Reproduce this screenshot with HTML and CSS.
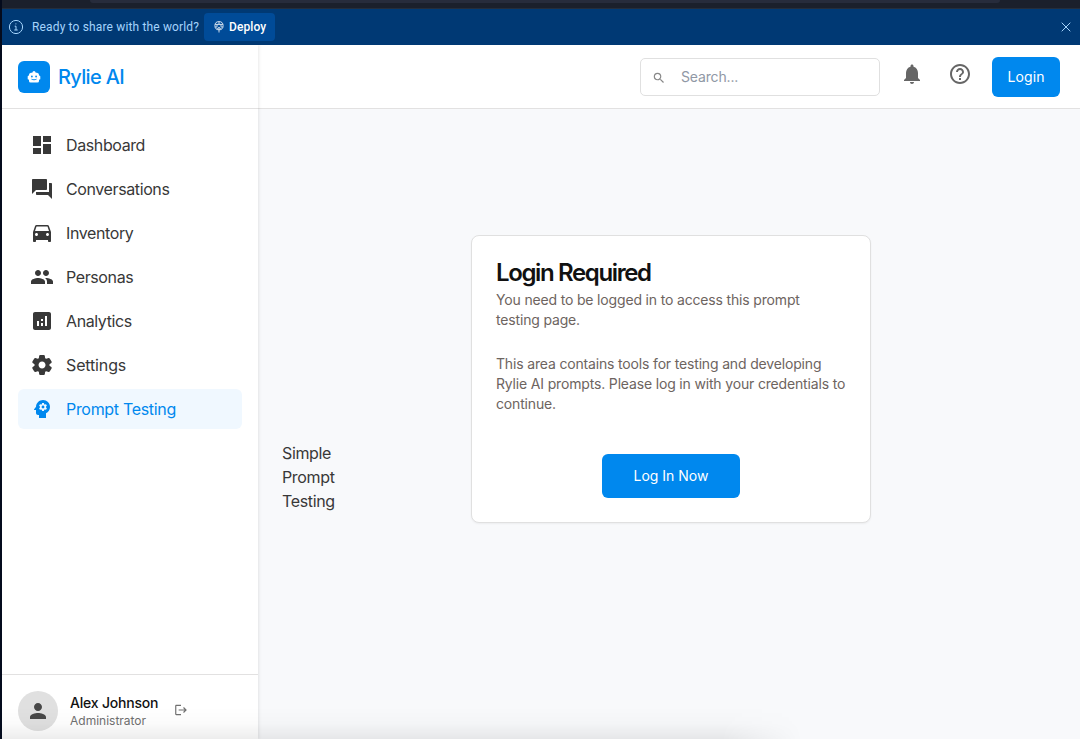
FILE: index.html
```html
<!DOCTYPE html>
<html lang="en">
<head>
<meta charset="utf-8">
<title>Rylie AI</title>
<link rel="stylesheet" href="styles.css">
</head>
<body>
<div class="window">
  <div class="chrome"><div class="address"></div></div>
  <div class="banner">
    <svg class="info" viewBox="0 0 16 16"><circle cx="8" cy="8" r="6.6"/><path d="M6.700 7.200H8v3.800M6.300 11h3.400M7.400 4.900h1"/></svg>
    <span class="banner-text">Ready to share with the world?</span>
    <button class="deploy"><svg viewBox="0 0 12 12"><circle cx="6" cy="4.700" r="4.100"/><path d="M2.200 3.400h7.600M2.200 6h2M7.800 6h2M6 .8v2.600M6 6.500v5M4 3.400v2.300M8 3.400v2.300M3.900 8.300L6 6.300l2.100 2"/></svg><span>Deploy</span></button>
    <svg class="close" viewBox="0 0 12 12"><path d="M1.700 1.700l8.600 8.600M10.300 1.700l-8.600 8.600"/></svg>
  </div>
  <div class="app">
    <aside class="sidebar">
      <div class="brand">
        <span class="logo"><svg viewBox="0 0 14 14"><path fill-rule="evenodd" d="M5.700 1.700Q7 .3 8.300 1.700L8.700 2.800H10Q12 3 12.200 5.500L13.300 6.300V9.200L12 9.800V11Q12 12.600 10.400 12.600H3.600Q2 12.600 2 11V9.800L.7 9.200V6.300L1.800 5.500Q2 3 4 2.800H5.300ZM4.900 5.600a.9.9 0 1 0 0 1.800.9.9 0 0 0 0-1.800zM9.100 5.600a.9.9 0 1 0 0 1.800.9.9 0 0 0 0-1.800zM4 8.900Q7 11.500 10 8.900L9.500 8.700Q7 10 4.500 8.700Z"/></svg></span>
        <span class="brand-name">Rylie AI</span>
      </div>
      <nav class="nav">
        <a class="item"><svg viewBox="0 0 24 24"><path d="M3 13h8V3H3v10zm0 8h8v-6H3v6zm10 0h8V11h-8v10zm0-18v6h8V3h-8z"/></svg><span>Dashboard</span></a>
        <a class="item"><svg viewBox="0 0 24 24"><path d="M21 6h-2v9H6v2c0 .55.45 1 1 1h11l4 4V7c0-.55-.45-1-1-1zm-4 6V3c0-.55-.45-1-1-1H3c-.55 0-1 .45-1 1v14l4-4h10c.55 0 1-.45 1-1z"/></svg><span>Conversations</span></a>
        <a class="item"><svg viewBox="0 0 24 24"><path d="M18.920 5.010C18.720 4.420 18.160 4 17.500 4h-11c-.66 0-1.210.42-1.420 1.010L3 11v9c0 .55.45 1 1 1h1c.55 0 1-.45 1-1v-1h12v1c0 .55.45 1 1 1h1c.55 0 1-.45 1-1v-9l-2.080-5.990zM6.500 15c-.83 0-1.500-.67-1.500-1.500S5.670 12 6.500 12s1.500.67 1.500 1.500S7.330 15 6.500 15zm11 0c-.83 0-1.500-.67-1.500-1.500s.67-1.500 1.500-1.500 1.500.67 1.500 1.500-.67 1.500-1.500 1.500zM5 10l1.500-4.500h11L19 10H5z"/></svg><span>Inventory</span></a>
        <a class="item"><svg viewBox="0 0 24 24"><path d="M16 11c1.660 0 2.990-1.340 2.990-3S17.660 5 16 5s-3 1.340-3 3 1.340 3 3 3zm-8 0c1.660 0 2.990-1.340 2.990-3S9.660 5 8 5 5 6.340 5 8s1.340 3 3 3zm0 2c-2.330 0-7 1.170-7 3.500V19h14v-2.500c0-2.330-4.670-3.500-7-3.500zm8 0c-.29 0-.62.02-.97.05 1.160.84 1.970 1.970 1.970 3.450V19h6v-2.500c0-2.330-4.670-3.500-7-3.500z"/></svg><span>Personas</span></a>
        <a class="item"><svg viewBox="0 0 24 24"><path d="M19 3H5c-1.100 0-2 .9-2 2v14c0 1.100.9 2 2 2h14c1.100 0 2-.9 2-2V5c0-1.100-.9-2-2-2zM9 17H7v-5h2v5zm4 0h-2v-3h2v3zm0-5h-2v-2h2v2zm4 5h-2V7h2v10z"/></svg><span>Analytics</span></a>
        <a class="item settings"><svg viewBox="0 0 24 24"><path d="M19.500 12c0-.23-.01-.45-.03-.68l1.860-1.410c.4-.3.51-.86.26-1.300l-1.870-3.230c-.25-.44-.79-.62-1.250-.42l-2.150.91c-.37-.26-.76-.49-1.170-.68l-.29-2.310C14.800 2.380 14.370 2 13.870 2h-3.730c-.51 0-.94.38-1 .88l-.29 2.310c-.41.19-.8.42-1.170.68l-2.150-.91c-.46-.2-1-.02-1.250.42L2.410 8.620c-.25.44-.14.99.26 1.300l1.860 1.410a7.300 7.300 0 0 0 0 1.350l-1.860 1.410c-.4.3-.51.86-.26 1.300l1.870 3.230c.25.44.79.62 1.250.42l2.150-.91c.37.26.76.49 1.170.68l.29 2.310c.06.5.49.88.99.88h3.730c.5 0 .93-.38.99-.88l.29-2.310c.41-.19.8-.42 1.170-.68l2.150.91c.46.2 1 .02 1.250-.42l1.870-3.230c.25-.44.14-.99-.26-1.300l-1.860-1.410c.03-.23.04-.45.04-.68zm-7.460 3.500c-1.930 0-3.500-1.570-3.500-3.500s1.570-3.500 3.500-3.500 3.500 1.570 3.500 3.500-1.570 3.500-3.500 3.500z"/></svg><span>Settings</span></a>
        <a class="item active"><svg viewBox="0 0 24 24"><path d="M13 8.570c-.79 0-1.430.64-1.430 1.430s.64 1.430 1.430 1.430 1.430-.64 1.430-1.430-.64-1.430-1.430-1.430z"/><path d="M13 3C9.250 3 6.200 5.940 6.020 9.640L4.100 12.200c-.25.33-.01.8.4.8H6v3c0 1.100.9 2 2 2h1v3h7v-4.680c2.360-1.120 4-3.530 4-6.320 0-3.870-3.130-7-7-7zm3 7c0 .13-.01.26-.02.39l.83.66c.08.06.1.16.05.25l-.8 1.390c-.05.09-.16.12-.24.09l-.99-.4c-.21.16-.43.29-.67.39L14 13.830c-.01.1-.1.17-.2.17h-1.600c-.1 0-.18-.07-.2-.17l-.15-1.060c-.25-.1-.47-.23-.68-.39l-.99.4c-.09.03-.2 0-.25-.09l-.8-1.390c-.05-.08-.03-.19.05-.25l.84-.66c-.01-.13-.02-.26-.02-.39s.02-.27.04-.39l-.85-.66c-.08-.06-.1-.16-.05-.26l.8-1.380c.05-.09.15-.12.24-.09l1 .4c.2-.15.43-.29.67-.39L12 6.170c.02-.1.1-.17.2-.17h1.600c.1 0 .18.07.2.17l.15 1.060c.24.1.46.23.67.39l1-.4c.09-.03.2 0 .24.09l.8 1.380c.05.09.03.2-.05.26l-.85.66c.03.12.04.25.04.39z"/></svg><span>Prompt Testing</span></a>
      </nav>
      <div class="user">
        <span class="avatar"><svg viewBox="0 0 24 24"><path d="M12 12c2.210 0 4-1.790 4-4s-1.790-4-4-4-4 1.790-4 4 1.790 4 4 4zm0 2c-2.670 0-8 1.340-8 4v2h16v-2c0-2.660-5.330-4-8-4z"/></svg></span>
        <div class="who"><div class="name">Alex Johnson</div><div class="role">Administrator</div></div>
        <svg class="logout" viewBox="0 0 24 24"><path d="M17 7l-1.410 1.410L18.170 11H8v2h10.170l-2.580 2.580L17 17l5-5zM4 5h8V3H4c-1.100 0-2 .9-2 2v14c0 1.100.9 2 2 2h8v-2H4V5z"/></svg>
      </div>
    </aside>
    <div class="content">
      <header class="topbar">
        <div class="search"><svg viewBox="0 0 24 24"><path d="M15.500 14h-.79l-.28-.27A6.470 6.470 0 0 0 16 9.500 6.500 6.500 0 1 0 9.500 16c1.610 0 3.090-.59 4.230-1.570l.27.28v.79l5 4.990L20.490 19l-4.990-5zm-6 0C7.010 14 5 11.990 5 9.500S7.010 5 9.500 5 14 7.010 14 9.500 11.990 14 9.500 14z"/></svg><span>Search...</span></div>
        <svg class="bell" viewBox="0 0 24 24"><path d="M12 22c1.100 0 2-.9 2-2h-4c0 1.100.89 2 2 2zm6-6v-5c0-3.070-1.640-5.640-4.500-6.320V4c0-.83-.67-1.500-1.500-1.500s-1.500.67-1.500 1.500v.68C7.630 5.360 6 7.920 6 11v5l-2 2v1h16v-1l-2-2z"/></svg>
        <svg class="help" viewBox="0 0 24 24"><path d="M11 18h2v-2h-2v2zm1-16C6.480 2 2 6.480 2 12s4.480 10 10 10 10-4.480 10-10S17.520 2 12 2zm0 18c-4.410 0-8-3.590-8-8s3.590-8 8-8 8 3.590 8 8-3.590 8-8 8zm0-14c-2.210 0-4 1.790-4 4h2c0-1.100.9-2 2-2s2 .9 2 2c0 2-3 1.750-3 5h2c0-2.250 3-2.500 3-5 0-2.210-1.790-4-4-4z"/></svg>
        <button class="login">Login</button>
      </header>
      <main class="main">
        <div class="label">Simple Prompt Testing</div>
        <div class="stage">
          <section class="card">
            <h1>Login Required</h1>
            <p>You need to be logged in to access this prompt testing page.</p>
            <p class="second">This area contains tools for testing and developing Rylie AI prompts. Please log in with your credentials to continue.</p>
            <button class="cta">Log In Now</button>
          </section>
        </div>
      </main>
    </div>
  </div>
  <div class="shade"></div>
</div>
</body>
</html>
```

FILE: styles.css
```css
* { box-sizing: border-box; }
body { margin: 0; font-family: Inter, "Liberation Sans", sans-serif; font-size: 16px; line-height: 24px; color: #383838; }
button { border: 0; padding: 0; font: inherit; color: inherit; letter-spacing: inherit; }
svg { display: block; flex: none; fill: currentColor; }
.window { position: relative; width: 1080px; height: 739px; overflow: hidden; display: flex; flex-direction: column; border-left: 2px solid #040b1d; }
.chrome { height: 9px; flex: none; background: #1b202c; border-bottom: 1px solid #252e3c; padding: 0 80px 0 88px; }
.address { height: 3px; background: #272c3c; border-radius: 0 0 4px 4px; }
.banner { height: 36px; flex: none; background: #003974; display: flex; align-items: center; padding: 0 8px 0 6px; color: #a5d4fc; font-family: Roboto, sans-serif; font-size: 12px; line-height: 16px; }
.info { width: 16px; height: 16px; fill: none; stroke: currentColor; }
.banner-text { margin-left: 8px; width: 166px; white-space: nowrap; letter-spacing: .15px; }
.deploy { margin-left: 6px; width: 71px; height: 28px; border-radius: 4px; background: #004b98; color: #fff; display: flex; align-items: center; gap: 4px; padding-left: 9px; font-weight: 500; letter-spacing: .1px; }
.deploy svg { width: 12px; height: 12px; fill: none; stroke: currentColor; stroke-width: .8; }
.close { width: 12px; height: 12px; fill: none; stroke: currentColor; margin-left: auto; }
.app { flex: 1; display: flex; min-height: 0; }
.sidebar { width: 256px; flex: none; background: #fff; display: flex; flex-direction: column; box-shadow: 1px 0 3px rgba(0,0,0,.09); position: relative; }
.brand { height: 64px; flex: none; border-bottom: 1px solid #e2e1e1; display: flex; align-items: center; padding: 0 16px; gap: 8px; color: #0088ee; }
.logo { width: 32px; height: 32px; border-radius: 6px; background: #0088ee; color: #fff; display: grid; place-items: center; }
.logo svg { width: 14px; height: 14px; }
.brand-name { font-size: 20px; font-weight: 500; letter-spacing: -.66px; }
.nav { flex: 1; padding: 16px; display: flex; flex-direction: column; gap: 4px; }
.item { height: 40px; border-radius: 6px; display: flex; align-items: center; padding: 0 12px; gap: 12px; letter-spacing: -.39px; }
.item svg { width: 24px; height: 24px; }
.settings { letter-spacing: -.14px; }
.active { background: #f0f8ff; color: #0088ee; letter-spacing: -.31px; }
.user { height: 65px; flex: none; border-top: 1px solid #e2e1e1; display: flex; padding: 16px 16px 0; }
.avatar { width: 40px; height: 40px; border-radius: 50%; background: #e0e0e0; color: #484848; display: grid; place-items: center; }
.avatar svg { width: 24px; height: 24px; }
.who { margin-left: 12px; padding-top: 2px; }
.name { font-size: 14px; line-height: 20px; font-weight: 500; color: #111; letter-spacing: -.2px; }
.role { font-size: 12px; line-height: 16px; color: #707070; }
.logout { width: 14px; height: 14px; margin: 12px 0 0 16px; color: #707070; }
.content { flex: 1; display: flex; flex-direction: column; min-width: 0; }
.topbar { height: 64px; flex: none; background: #fff; border-bottom: 1px solid #e2e1e1; display: flex; align-items: center; justify-content: flex-end; padding-right: 20px; font-size: 14px; letter-spacing: -.15px; color: #666; }
.search { width: 240px; height: 38px; border: 1px solid #e0e0e0; border-radius: 5px; display: flex; align-items: center; padding-left: 11px; gap: 15px; color: #9098a5; }
.search svg { width: 14px; height: 14px; color: #888; margin-top: 2px; }
.bell, .help { width: 24px; height: 24px; margin-bottom: 6px; }
.bell { margin-left: 20px; }
.help { margin: 0 20px 6px 24px; }
.login { width: 68px; height: 40px; border-radius: 6px; background: #0088ee; color: #fff; letter-spacing: .1px; }
.main { flex: 1; background: #f8f9fb; display: flex; padding: 0 24px; }
.label { width: 60px; padding-top: 332px; letter-spacing: -.35px; }
.stage { padding: 126px 0 0 129px; }
.card { width: 400px; height: 288px; background: #fff; border: 1px solid #e0e0e0; border-radius: 8px; box-shadow: 0 1px 2px rgba(0,0,0,.05); padding: 24px; font-size: 14px; line-height: 20px; letter-spacing: -.165px; color: #6d6460; display: flex; flex-direction: column; }
h1 { margin: 0 0 5px; padding-top: 1px; font-size: 24px; line-height: 24px; font-weight: 600; color: #111; letter-spacing: -1.37px; }
p { margin: 0; }
.second { margin-top: 24px; }
.cta { width: 138px; height: 44px; border-radius: 6px; background: #0088ee; color: #fff; align-self: center; margin-top: 40px; letter-spacing: 0; }
.shade { position: absolute; left: 0; bottom: 0; width: 800px; height: 32px; background: linear-gradient(to top, rgba(0,0,0,.07), rgba(0,0,0,.015) 50%, transparent); mask-image: linear-gradient(to right, #000 90%, transparent); }
```
